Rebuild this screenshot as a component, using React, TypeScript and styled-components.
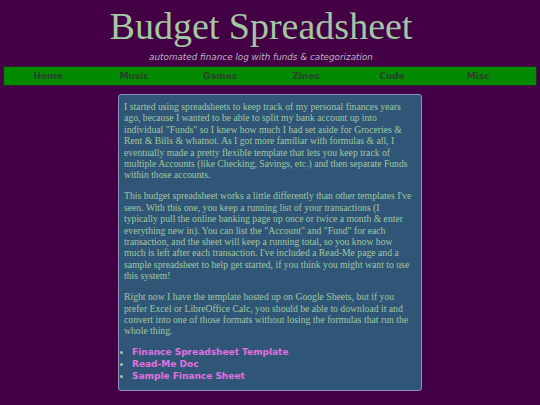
import styled, { createGlobalStyle } from "styled-components";

// グローバル
const GlobalStyle = createGlobalStyle`
  html, body {
    margin: 0;
    padding: 0;
    background-color: #440044;
  }
`;

const SPage = styled.div`
  width: 540px;
  min-height: 405px;
  background-color: #440044;
  padding-top: 5px;
  box-sizing: border-box;
`;

const SHeader = styled.header`
  text-align: center;
  padding-right: 18px;
`;

const STitle = styled.h1`
  margin: 0;
  font-family: "Liberation Serif", serif;
  font-weight: normal;
  font-size: 38px;
  line-height: 42px;
  color: #a3c6a3;
`;

const SSubtitle = styled.p`
  margin: 4px 0 0;
  font-family: "DejaVu Sans", sans-serif;
  font-style: italic;
  font-size: 8.8px;
  line-height: 12px;
  color: #b9b4c4;
`;

const SNav = styled.nav`
  display: grid;
  grid-template-columns: repeat(6, 86px);
  margin: 3px 3px 0;
  padding-left: 1px;
  height: 20px;
  background-color: #008a00;
  border: 1px solid #302430;
  box-sizing: border-box;
`;

const SNavItem = styled.a`
  display: flex;
  align-items: center;
  justify-content: center;
  font-family: "DejaVu Sans", sans-serif;
  font-weight: bold;
  font-size: 9px;
  color: #2e402e;
  text-decoration: none;
`;

const SBox = styled.main`
  width: 304px;
  margin: 8px auto 0;
  padding: 6px 5px 8px;
  box-sizing: border-box;
  background-color: #305677;
  border: 1px solid #8e8ec0;
  border-radius: 3px;
`;

const SText = styled.p`
  margin: 0 0 9.5px;
  font-family: "Liberation Serif", serif;
  font-size: 9.7px;
  line-height: 11.4px;
  color: #a0c6a0;
`;

const SList = styled.ul`
  margin: 0;
  padding-left: 8px;
  color: #a0c6a0;
  font-size: 9px;
`;

const SItem = styled.li`
  line-height: 12px;
`;

const SLink = styled.a`
  font-family: "DejaVu Sans", sans-serif;
  font-weight: bold;
  font-size: 9px;
  color: #e070e0;
  text-decoration: none;
`;

const navItems = ["Home", "Music", "Games", "Zines", "Code", "Misc"];
const links = ["Finance Spreadsheet Template", "Read-Me Doc", "Sample Finance Sheet"];

export default function App() {
  return (
    <>
      <GlobalStyle />
      <SPage>
        <SHeader>
          <STitle>Budget Spreadsheet</STitle>
          <SSubtitle>automated finance log with funds &amp; categorization</SSubtitle>
        </SHeader>

        <SNav>
          {navItems.map((item) => (
            <SNavItem key={item} href="#">
              {item}
            </SNavItem>
          ))}
        </SNav>

        <SBox>
          <SText>
            I started using spreadsheets to keep track of my personal finances years ago, because I
            wanted to be able to split my bank account up into individual "Funds" so I knew how much I
            had set aside for Groceries &amp; Rent &amp; Bills &amp; whatnot. As I got more familiar with
            formulas &amp; all, I eventually made a pretty flexible template that lets you keep track of
            multiple Accounts (like Checking, Savings, etc.) and then separate Funds within those
            accounts.
          </SText>
          <SText>
            This budget spreadsheet works a little differently than other templates I've seen. With
            this one, you keep a running list of your transactions (I
            <br />
            typically pull the online banking page up once or twice a month &amp; enter everything new
            in). You can list the "Account" and "Fund" for each transaction, and the sheet will keep a
            running total, so you know how much is left after each transaction. I've included a
            Read-Me page and a sample spreadsheet to help get started, if you think you might want to
            use this system!
          </SText>
          <SText>
            Right now I have the template hosted up on Google Sheets, but if you prefer Excel or
            LibreOffice Calc, you should be able to download it and convert into one of those formats
            without losing the formulas that run the whole thing.
          </SText>
          <SList>
            {links.map((link) => (
              <SItem key={link}>
                <SLink href="#">{link}</SLink>
              </SItem>
            ))}
          </SList>
        </SBox>
      </SPage>
    </>
  );
}
